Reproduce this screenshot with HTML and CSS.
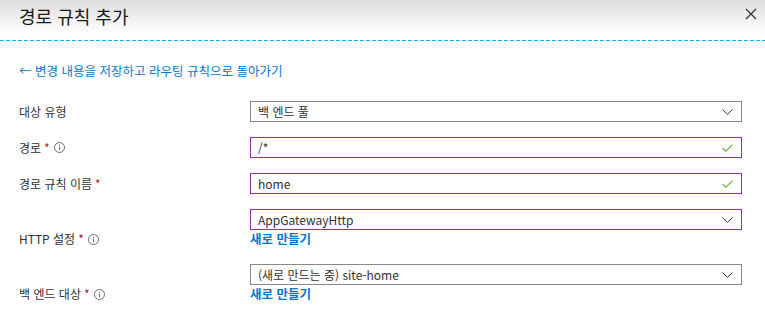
FILE: index.html
```html
<!doctype html>
<html lang="ko">
<head>
	<meta charset="UTF-8">
	<title>경로 규칙 추가</title>
	<link rel="stylesheet" href="styles.css">
</head>
<body>
	<div class="blade">
		<div class="header">
			<h1 class="title">경로 규칙 추가</h1>
			<svg class="close" width="12" height="12" viewBox="0 0 12 12">
				<path d="M1 1 L11 11 M11 1 L1 11" stroke="#323130" stroke-width="1.2" fill="none"/>
			</svg>
		</div>
		<div class="dashes"></div>

		<div class="content">
			<a class="back" href="#">&larr; 변경 내용을 저장하고 라우팅 규칙으로 돌아가기</a>

			<div class="form">
				<div class="row">
					<div class="label">대상 유형</div>
					<div class="field">
						<div class="box">
							<span class="value">백 엔드 풀</span>
							<svg class="chev" width="11" height="6" viewBox="0 0 11 6"><path d="M0.5 0.5 L5.5 5.3 L10.5 0.5" stroke="#323130" stroke-width="1" fill="none"/></svg>
						</div>
					</div>
				</div>

				<div class="row">
					<div class="label">경로<span class="req">*</span>
						<svg class="info" width="11" height="11" viewBox="0 0 11 11"><circle cx="5.5" cy="5.5" r="5" stroke="#605e5c" stroke-width="0.9" fill="none"/><path d="M5.5 4.6 V8.2" stroke="#605e5c" stroke-width="0.9"/><circle cx="5.5" cy="3.1" r="0.6" fill="#605e5c"/></svg>
					</div>
					<div class="field">
						<div class="box valid">
							<span class="value">/*</span>
							<svg class="check" width="11" height="8" viewBox="0 0 11 8"><path d="M0.5 4 L3.8 7.2 L10.5 0.6" stroke="#6bb03f" stroke-width="1.1" fill="none"/></svg>
						</div>
					</div>
				</div>

				<div class="row">
					<div class="label">경로 규칙 이름<span class="req">*</span></div>
					<div class="field">
						<div class="box valid">
							<span class="value">home</span>
							<svg class="check" width="11" height="8" viewBox="0 0 11 8"><path d="M0.5 4 L3.8 7.2 L10.5 0.6" stroke="#6bb03f" stroke-width="1.1" fill="none"/></svg>
						</div>
					</div>
				</div>

				<div class="row tall">
					<div class="label">HTTP 설정<span class="req">*</span>
						<svg class="info" width="11" height="11" viewBox="0 0 11 11"><circle cx="5.5" cy="5.5" r="5" stroke="#605e5c" stroke-width="0.9" fill="none"/><path d="M5.5 4.6 V8.2" stroke="#605e5c" stroke-width="0.9"/><circle cx="5.5" cy="3.1" r="0.6" fill="#605e5c"/></svg>
					</div>
					<div class="field">
						<div class="box valid">
							<span class="value">AppGatewayHttp</span>
							<svg class="chev" width="11" height="6" viewBox="0 0 11 6"><path d="M0.5 0.5 L5.5 5.3 L10.5 0.5" stroke="#323130" stroke-width="1" fill="none"/></svg>
						</div>
						<a class="create" href="#">새로 만들기</a>
					</div>
				</div>

				<div class="row tall last">
					<div class="label">백 엔드 대상<span class="req">*</span>
						<svg class="info" width="11" height="11" viewBox="0 0 11 11"><circle cx="5.5" cy="5.5" r="5" stroke="#605e5c" stroke-width="0.9" fill="none"/><path d="M5.5 4.6 V8.2" stroke="#605e5c" stroke-width="0.9"/><circle cx="5.5" cy="3.1" r="0.6" fill="#605e5c"/></svg>
					</div>
					<div class="field">
						<div class="box">
							<span class="value">(새로 만드는 중) site-home</span>
							<svg class="chev" width="11" height="6" viewBox="0 0 11 6"><path d="M0.5 0.5 L5.5 5.3 L10.5 0.5" stroke="#323130" stroke-width="1" fill="none"/></svg>
						</div>
						<a class="create" href="#">새로 만들기</a>
					</div>
				</div>
			</div>
		</div>
	</div>
</body>
</html>
```

FILE: styles.css
```css
* {
	padding: 0;
	margin: 0;
	box-sizing: border-box;
}
body {
	background: #fff;
	color: #323130;
	font-family: "Noto Sans CJK KR", "Noto Sans", sans-serif;
	font-size: 12px;
}
/*---------------------------- header ----------------------------*/
.header {
	height: 40px;
	padding: 4px 8px 0 19px;
	display: flex;
	justify-content: space-between;
	align-items: flex-start;
	background: linear-gradient(#dcdcdc 0, #f4f4f4 22px, #fff 36px);
}
.title {
	font-size: 18px;
	font-weight: normal;
	line-height: 24px;
	color: #1b1a19;
}
.close {
	margin-top: 4px;
}
.dashes {
	height: 1px;
	background: repeating-linear-gradient(90deg, #00b7f1 0 4px, transparent 4px 6px);
}
/*---------------------------- content ----------------------------*/
.content {
	padding: 22px 23px 0 19px;
}
.back {
	display: block;
	color: #0078d4;
	text-decoration: none;
	font-size: 12.5px;
	line-height: 16px;
}
.form {
	margin-top: 22px;
	display: flex;
	flex-direction: column;
	gap: 15px;
}
.row {
	display: grid;
	grid-template-columns: 231px 492px;
	align-items: center;
}
.row.tall {
	align-items: end;
}
.row.last {
	margin-top: 2px;
}
.label {
	line-height: 16px;
	display: flex;
	align-items: center;
}
.req {
	color: #a4262c;
	margin-left: 3px;
}
.info {
	margin-left: 4px;
}
.box {
	height: 21px;
	border: 1px solid #8a8886;
	padding: 0 7px;
	display: flex;
	align-items: center;
	justify-content: space-between;
}
.box.valid {
	border-color: #8a31ac;
}
.value {
	line-height: 19px;
	color: #323130;
}
.chev {
	margin-right: 1px;
}
.check {
	margin-right: 1px;
}
.create {
	display: block;
	color: #0078d4;
	font-weight: 600;
	font-size: 12.5px;
	text-decoration: none;
	line-height: 16px;
	margin-top: 1px;
}
```
